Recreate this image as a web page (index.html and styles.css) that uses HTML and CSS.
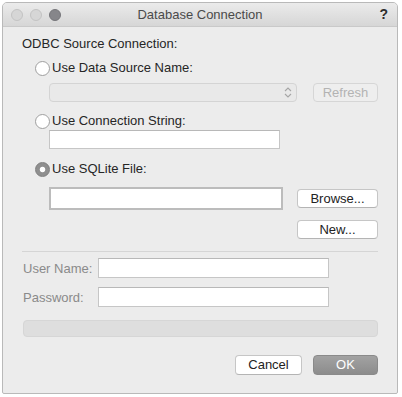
FILE: index.html
```html
<!DOCTYPE html>
<html lang="en">
<head>
    <meta charset="UTF-8">
    <meta name="viewport" content="width=device-width, initial-scale=1.0">
    <title>Database Connection</title>
    <link rel="stylesheet" href="styles.css">
</head>
<body>
    <div class="window">
        <div class="titlebar">
            <div class="lights">
                <span class="light"></span>
                <span class="light"></span>
                <span class="light dark"></span>
            </div>
            <div class="title">Database Connection</div>
            <div class="help">?</div>
        </div>
        <div class="content">
            <div class="heading">ODBC Source Connection:</div>

            <div class="radio-row row-dsn"><span class="radio"></span>Use Data Source Name:</div>
            <div class="sub-row row-select">
                <div class="select">
                    <svg width="8" height="11" viewBox="0 0 8 11">
                        <path d="M1 4 L4 1 L7 4 M1 7 L4 10 L7 7" fill="none" stroke="#a6a6a6" stroke-width="1.1"/>
                    </svg>
                </div>
                <button class="btn btn-refresh" disabled>Refresh</button>
            </div>

            <div class="radio-row row-conn"><span class="radio"></span>Use Connection String:</div>
            <div class="sub-row row-conn-input">
                <input type="text" class="field field-conn">
            </div>

            <div class="radio-row row-sqlite"><span class="radio checked"></span>Use SQLite File:</div>
            <div class="sub-row row-file">
                <input type="text" class="field field-file">
                <button class="btn btn-side">Browse...</button>
            </div>
            <div class="sub-row row-new">
                <button class="btn btn-side">New...</button>
            </div>

            <div class="separator"></div>

            <div class="cred-row row-user">
                <label for="user">User Name:</label>
                <input type="text" id="user" class="field field-cred">
            </div>
            <div class="cred-row row-pass">
                <label for="pass">Password:</label>
                <input type="password" id="pass" class="field field-cred">
            </div>

            <div class="progress"></div>

            <div class="actions">
                <button class="btn btn-cancel">Cancel</button>
                <button class="btn btn-ok">OK</button>
            </div>
        </div>
    </div>
</body>
</html>
```

FILE: styles.css
```css
body {
    margin: 0;
    padding: 0;
    background: #ffffff;
    font-family: "Liberation Sans", Arial, sans-serif;
    font-size: 13px;
    color: #262626;
}
.window {
    box-sizing: border-box;
    width: 396px;
    height: 392px;
    margin: 2px 0 0 2px;
    border: 1px solid #b9b9b9;
    border-radius: 5px 5px 2px 2px;
    background: #ececec;
    display: flex;
    flex-direction: column;
    overflow: hidden;
}
.titlebar {
    height: 23px;
    border-bottom: 1px solid #c9c9c9;
    background: linear-gradient(#ebebeb, #d6d6d6);
    display: grid;
    grid-template-columns: 1fr auto 1fr;
    align-items: center;
}
.lights {
    display: flex;
    gap: 7px;
    padding-left: 8px;
}
.light {
    box-sizing: border-box;
    width: 12px;
    height: 12px;
    border-radius: 50%;
    background: #d6d6d6;
    border: 1px solid #c3c3c3;
}
.light.dark {
    background: #86868a;
    border-color: #76767a;
}
.title {
    color: #4a4a4a;
    line-height: 16px;
    padding-top: 1px;
}
.help {
    justify-self: end;
    padding-right: 9px;
    font-weight: bold;
    font-size: 14px;
    color: #2e2e2e;
    line-height: 16px;
    margin-top: -2px;
}
.content {
    flex: 1;
    padding: 9px 19px 0 19px;
    display: flex;
    flex-direction: column;
}
.heading {
    line-height: 16px;
}
.radio-row {
    display: flex;
    align-items: center;
    line-height: 16px;
    margin-left: 13px;
}
.radio {
    box-sizing: border-box;
    width: 15px;
    height: 15px;
    border-radius: 50%;
    border: 1px solid #9f9f9f;
    background: #ffffff;
    margin-right: 2px;
}
.radio.checked {
    border-color: #7e7e7e;
    background: radial-gradient(circle, #ffffff 0 2.3px, #8f8f8f 3.2px);
}
.row-dsn {
    margin-top: 8px;
}
.row-conn {
    margin-top: 11px;
}
.row-sqlite {
    margin-top: 12px;
}
.sub-row {
    display: flex;
    align-items: center;
    justify-content: space-between;
    margin-left: 27px;
}
.row-select {
    margin-top: 7px;
}
.row-conn-input {
    margin-top: 1px;
}
.row-file {
    margin-top: 10px;
}
.row-new {
    margin-top: 10px;
    justify-content: flex-end;
}
.select {
    box-sizing: border-box;
    width: 248px;
    height: 19px;
    border: 1px solid #d4d4d4;
    border-radius: 4px;
    background: #e9e9e9;
    display: flex;
    align-items: center;
    justify-content: flex-end;
    padding-right: 4px;
}
.field {
    box-sizing: border-box;
    height: 19px;
    border: 1px solid #c6c6c6;
    border-top-color: #b8b8b8;
    background: #ffffff;
    margin: 0;
    padding: 0 3px;
    font: inherit;
}
.field-conn {
    width: 231px;
}
.field-file {
    width: 234px;
    height: 23px;
    border: 2px solid #bcbcbc;
}
.btn {
    box-sizing: border-box;
    height: 19px;
    margin: 0;
    padding: 0;
    border: 1px solid #c6c6c6;
    border-bottom-color: #b4b4b4;
    border-radius: 4px;
    background: #ffffff;
    font: inherit;
    color: #222222;
    line-height: 16px;
}
.btn-side {
    width: 81px;
}
.btn-refresh {
    width: 65px;
    background: #eeeeee;
    border-color: #d6d6d6;
    color: #b3b3b3;
}
.separator {
    height: 1px;
    background: #d5d5d5;
    margin-top: 12px;
}
.cred-row {
    display: flex;
    align-items: center;
    margin-left: 1px;
}
.cred-row label {
    width: 75px;
    color: #8a8a8a;
}
.field-cred {
    width: 231px;
    height: 20px;
}
.row-user {
    margin-top: 6px;
}
.row-pass {
    margin-top: 9px;
}
.progress {
    height: 17px;
    margin-top: 13px;
    margin-left: 1px;
    box-sizing: border-box;
    border: 1px solid #d6d6d6;
    border-radius: 4px;
    background: #dedede;
}
.actions {
    display: flex;
    justify-content: flex-end;
    gap: 11px;
    margin-top: 18px;
}
.btn-cancel {
    width: 67px;
    height: 20px;
}
.btn-ok {
    width: 65px;
    height: 20px;
    border-color: #8a8a8a;
    background: linear-gradient(#a2a2a2, #8c8c8c);
    color: #ffffff;
}
```
